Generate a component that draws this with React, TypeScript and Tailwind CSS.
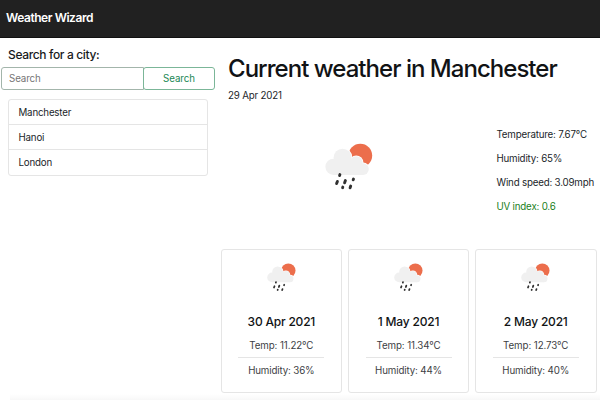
import React from "react";

const cities = ["Manchester", "Hanoi", "London"];

const details = ["Temperature: 7.67°C", "Humidity: 65%", "Wind speed: 3.09mph"];

const forecast = [
  { date: "30 Apr 2021", temp: "11.22°C", humidity: "36%" },
  { date: "1 May 2021", temp: "11.34°C", humidity: "44%" },
  { date: "2 May 2021", temp: "12.73°C", humidity: "40%" },
];

function RainIcon({ className }: { className: string }) {
  return (
    <svg viewBox="0 0 48 48" className={className} aria-hidden="true">
      <circle cx="35.3" cy="12.6" r="11.9" fill="#ec6e4c" />
      <g fill="#fff">
        <circle cx="17.6" cy="14.4" r="9.6" />
        <circle cx="31.2" cy="19.6" r="7.2" />
        <circle cx="38" cy="26.3" r="6.8" />
      </g>
      <g fill="#f0f0f0">
        <circle cx="8.5" cy="23.8" r="8.1" />
        <circle cx="17.6" cy="14.7" r="9" />
        <circle cx="31.2" cy="19.6" r="6.4" />
        <circle cx="38" cy="26.1" r="5.8" />
        <path d="M8.5 16h17l12.5 7v8.9H8.5z" />
      </g>
      <g stroke="#303030" strokeWidth="2.9" strokeLinecap="round">
        <path d="M14.9 31.6l-.3.9M12.4 38.4l-.8 2.2M20.4 37.5l-.8 2.3M28.5 36l-.3.8M17.8 44.1l-.2.6M25.7 43.1l-.6 1.7" />
      </g>
    </svg>
  );
}

export default function App() {
  return (
    <div className="relative flex h-[400px] w-[600px] flex-col overflow-hidden bg-white font-['Inter',sans-serif] text-[9.75px] tracking-[-0.2px] text-[#212529]">
      <header className="h-[37.5px] shrink-0 border-b border-[#111] bg-[#212121] pl-[6px] text-[12px] leading-[35px] font-semibold tracking-[-0.45px] text-white">
        Weather Wizard
      </header>
      <main className="flex min-h-0 flex-1">
        <aside className="w-[220.5px] shrink-0">
          <h2 className="mt-[9px] ml-[8px] text-[12px] leading-[16px] font-medium tracking-[-0.35px] text-[#181a1c]">
            Search for a city:
          </h2>
          <form className="mt-[4px] ml-[1px] flex h-[23.5px] w-[214px]" onSubmit={(e) => e.preventDefault()}>
            <input
              placeholder="Search"
              className="w-[143px] rounded-l-[3px] border border-[#a3b5ab] px-[7px] pt-[2px] tracking-[-0.1px] outline-none placeholder:text-[#757575]"
            />
            <button className="-ml-px flex-1 rounded-[3px] border border-[#7bb698] pt-[2px] tracking-[-0.1px] text-[#198754]">
              Search
            </button>
          </form>
          <ul className="mt-[8.5px] ml-[8px] w-[200px] divide-y divide-[#e5e5e5] rounded-[3px] border border-[#e5e5e5]">
            {cities.map((city) => (
              <li key={city} className="h-[25px] px-[9.5px] leading-[25px]">
                {city}
              </li>
            ))}
          </ul>
        </aside>
        <section className="flex-1">
          <h1 className="mt-[16px] ml-[7.5px] text-[24px] leading-[30px] font-[450] tracking-[-0.97px] whitespace-nowrap text-[#111315]">
            Current weather in Manchester
          </h1>
          <p className="mt-[4px] ml-[7.5px] leading-[15px] tracking-[-0.2px]">29 Apr 2021</p>
          <div className="mt-[24px] flex h-[97px]">
            <div className="w-[276px] pt-[16px] pl-[104.5px]">
              <RainIcon className="h-[48px] w-[48px]" />
            </div>
            <ul className="whitespace-nowrap">
              {details.map((line) => (
                <li key={line} className="h-[24.3px] leading-[15px]">
                  {line}
                </li>
              ))}
              <li className="leading-[15px] text-[#1a801a]">UV index: 0.6</li>
            </ul>
          </div>
          <div className="mt-[25px] flex gap-[5.5px]">
            {forecast.map((day) => (
              <article
                key={day.date}
                className="flex h-[144px] w-[121.7px] flex-col items-center rounded-[3px] border border-[#e5e5e5] text-[#3c4043]"
              >
                <RainIcon className="mt-[13px] h-[29px] w-[29px]" />
                <h3 className="mt-[22px] text-[12px] leading-[16px] font-medium tracking-[-0.2px] text-[#111315]">{day.date}</h3>
                <p className="mt-[8px] leading-[15px] tracking-[-0.1px]">Temp: {day.temp}</p>
                <hr className="mt-[4px] w-[86px] border-[#e5e5e5]" />
                <p className="mt-[5px] leading-[15px] tracking-[-0.15px]">Humidity: {day.humidity}</p>
              </article>
            ))}
          </div>
        </section>
      </main>
      <div className="absolute right-0 bottom-0 left-[10px] h-[6px] bg-linear-to-b from-transparent to-black/3" />
    </div>
  );
}
